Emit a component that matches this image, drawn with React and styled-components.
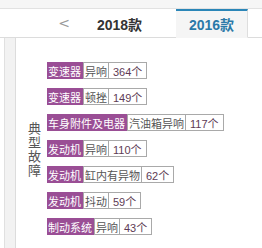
import React from 'react';
import styled, { createGlobalStyle } from 'styled-components';

const GlobalStyle = createGlobalStyle`
  html, body {
    margin: 0;
    padding: 0;
    background: #ffffff;
    font-family: "Liberation Sans", "Noto Sans CJK SC", sans-serif;
  }
`;

const Page = styled.div`
  width: 262px;
  height: 248px;
  overflow: hidden;
  background: #ffffff;
`;

const TopStrip = styled.div`
  height: 8px;
  background: #f6f6f6;
  border-bottom: 1px solid #e2e2e2;
`;

const TabBar = styled.div`
  display: flex;
  align-items: stretch;
  height: 28px;
  padding-left: 50px;
  background: #ffffff;
  border-bottom: 1px solid #dcdcdc;
`;

const Arrow = styled.div`
  width: 28px;
  display: flex;
  align-items: center;
  justify-content: center;
  color: #9a9a9a;
  font-size: 14px;
  font-family: "DejaVu Sans", sans-serif;
`;

const Tab = styled.div`
  box-sizing: border-box;
  width: 72px;
  margin-left: ${p => p.$gap}px;
  margin-bottom: -1px;
  display: flex;
  align-items: center;
  justify-content: center;
  font-size: 14px;
  font-weight: bold;
  color: ${p => (p.$active ? '#2b79a8' : '#333333')};
  background: ${p => (p.$active ? '#f5f5f5' : 'transparent')};
  border-top: 2px solid ${p => (p.$active ? '#2b86b8' : 'transparent')};
  border-right: 1px solid ${p => (p.$active ? '#dedede' : 'transparent')};
  border-bottom: 1px solid ${p => (p.$active ? '#f5f5f5' : 'transparent')};
`;

const Body = styled.div`
  display: flex;
  height: 210px;
`;

const SideRail = styled.div`
  width: 10px;
  margin-left: 4px;
  background: #f2f2f2;
  border-left: 1px solid #e0e0e0;
  border-right: 1px solid #dcdcdc;
`;

const Content = styled.div`
  flex: 1;
  display: flex;
  align-items: center;
  align-self: flex-start;
  padding: 24px 0 0 12px;
`;

const VerticalLabel = styled.div`
  width: 13px;
  font-size: 13px;
  line-height: 14px;
  color: #555555;
  font-family: "Noto Sans CJK SC", sans-serif;
  margin-right: 6px;
`;

const TagList = styled.div`
  display: flex;
  flex-direction: column;
  gap: 9px;
`;

const TagRow = styled.div`
  display: flex;
  height: 17px;
`;

const Part = styled.span`
  display: flex;
  align-items: center;
  padding: 0 2px 0 1px;
  background: #9a4e95;
  color: #ffffff;
  font-size: 11px;
  font-family: "Noto Sans CJK SC", sans-serif;
`;

const Cell = styled.span`
  display: flex;
  align-items: center;
  box-sizing: border-box;
  padding: 0 ${p => (p.$count ? 4 : 1)}px;
  border: 1px solid #a9a9a9;
  border-left: ${p => (p.$count ? 'none' : '1px solid #a9a9a9')};
  background: #ffffff;
  color: ${p => (p.$count ? '#5e3b55' : '#555555')};
  font-size: 11px;
  font-family: "Liberation Sans", "Noto Sans CJK SC", sans-serif;
`;

const faults = [
  { part: '变速器', issue: '异响', count: 364 },
  { part: '变速器', issue: '顿挫', count: 149 },
  { part: '车身附件及电器', issue: '汽油箱异响', count: 117 },
  { part: '发动机', issue: '异响', count: 110 },
  { part: '发动机', issue: '缸内有异物', count: 62 },
  { part: '发动机', issue: '抖动', count: 59 },
  { part: '制动系统', issue: '异响', count: 43 },
];

export default function App() {
  return (
    <Page>
      <GlobalStyle />
      <TopStrip />
      <TabBar>
        <Arrow>&lt;</Arrow>
        <Tab $gap={6}>2018款</Tab>
        <Tab $gap={20} $active>2016款</Tab>
      </TabBar>
      <Body>
        <SideRail />
        <Content>
          <VerticalLabel>典型故障</VerticalLabel>
          <TagList>
            {faults.map((f, i) => (
              <TagRow key={i}>
                <Part>{f.part}</Part>
                <Cell>{f.issue}</Cell>
                <Cell $count>{f.count}个</Cell>
              </TagRow>
            ))}
          </TagList>
        </Content>
      </Body>
    </Page>
  );
}
